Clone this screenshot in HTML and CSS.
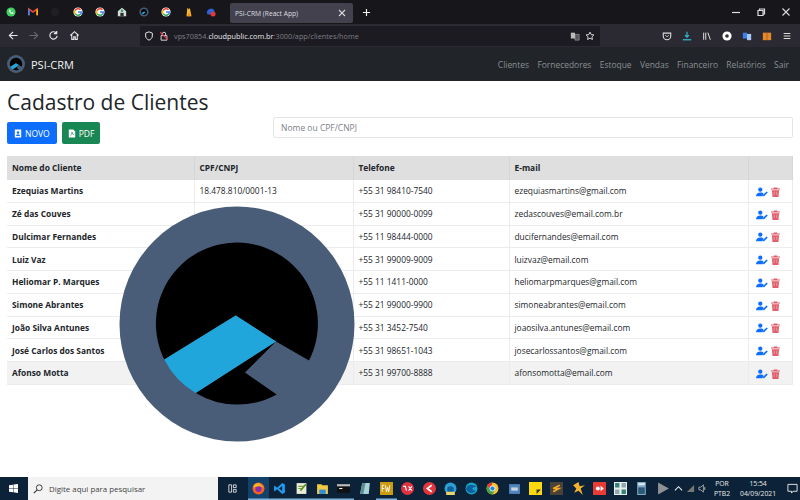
FILE: index.html
```html
<!DOCTYPE html>
<html lang="pt-BR">
<head>
<meta charset="utf-8">
<title>PSI-CRM (React App)</title>
<link rel="stylesheet" href="styles.css">
</head>
<body>
<div class="window">
  <div class="tabstrip">
    <div class="pins">
      <svg class="pin" viewBox="0 0 12 12"><circle cx="6" cy="6" r="5.500" fill="#3fd263"/><path d="M3.500 3.500c0 3 2 5 5 5l.7-1.500-1.500-.7-.7.7c-1-.4-1.500-1-1.900-1.900l.7-.7-.7-1.500z" fill="#fff"/></svg>
      <svg class="pin" viewBox="0 0 12 12"><path d="M1 10V2.500l5 3.500 5-3.500V10" fill="none" stroke="#e8453c" stroke-width="2"/><path d="M1 10V3" stroke="#3f85f4" stroke-width="2"/><path d="M11 10V3" stroke="#f6b704" stroke-width="2"/></svg>
      <svg class="pin" viewBox="0 0 12 12"><circle cx="6" cy="6" r="5" fill="#202024"/></svg>
      <svg class="pin" viewBox="0 0 12 12"><circle cx="6" cy="6" r="5.500" fill="#fff"/><path d="M9 3.200A4 4 0 0 0 2.600 4.300" fill="none" stroke="#e8453c" stroke-width="1.800"/><path d="M2.400 4A4 4 0 0 0 2.800 8.500" fill="none" stroke="#f6b704" stroke-width="1.800"/><path d="M2.800 8.300A4 4 0 0 0 9 8.700" fill="none" stroke="#34a853" stroke-width="1.800"/><path d="M6 6h4a4 4 0 0 1-1.200 2.900" fill="none" stroke="#4285f4" stroke-width="1.800"/></svg>
      <svg class="pin" viewBox="0 0 12 12"><circle cx="6" cy="6" r="5.500" fill="#fff"/><path d="M9 3.200A4 4 0 0 0 2.600 4.300" fill="none" stroke="#e8453c" stroke-width="1.800"/><path d="M2.400 4A4 4 0 0 0 2.800 8.500" fill="none" stroke="#f6b704" stroke-width="1.800"/><path d="M2.800 8.300A4 4 0 0 0 9 8.700" fill="none" stroke="#34a853" stroke-width="1.800"/><path d="M6 6h4a4 4 0 0 1-1.200 2.900" fill="none" stroke="#4285f4" stroke-width="1.800"/></svg>
      <svg class="pin" viewBox="0 0 12 12"><path d="M1 11V5l5-4 5 4v6z" fill="#d5dcd8"/><path d="M4 11V7h4v4z" fill="#2d3236"/><circle cx="6" cy="4.500" r="1.500" fill="#2f9e64"/></svg>
      <svg class="pin" viewBox="0 0 12 12"><circle cx="6" cy="6" r="5.500" fill="#4a5d78"/><circle cx="6" cy="6" r="3.600" fill="#050505"/><path d="M2.800 7.400 6 5.300l1.800 1.200L4.500 9z" fill="#22a7dc"/></svg>
      <svg class="pin" viewBox="0 0 12 12"><circle cx="6" cy="6" r="5.500" fill="#fff"/><path d="M9 3.200A4 4 0 0 0 2.600 4.300" fill="none" stroke="#e8453c" stroke-width="1.800"/><path d="M2.400 4A4 4 0 0 0 2.800 8.500" fill="none" stroke="#f6b704" stroke-width="1.800"/><path d="M2.800 8.300A4 4 0 0 0 9 8.700" fill="none" stroke="#34a853" stroke-width="1.800"/><path d="M6 6h4a4 4 0 0 1-1.200 2.900" fill="none" stroke="#4285f4" stroke-width="1.800"/></svg>
      <svg class="pin" viewBox="0 0 12 12"><path d="M3 11 4 1l2 2 1-2 2 10z" fill="#f8b92c"/><path d="M4 11 6 6l2 5z" fill="#f58a1f"/></svg>
      <svg class="pin" viewBox="0 0 12 12"><path d="M1 7a5 5 0 0 1 9-3v5H2z" fill="#2d63d8"/><circle cx="8.500" cy="8.500" r="3" fill="#e53935"/></svg>
    </div>
    <div class="tab"><span>PSI-CRM (React App)</span><svg class="tab-x" viewBox="0 0 8 8"><path d="M1 1l6 6M7 1 1 7" stroke="#d8d8da" stroke-width="1.100"/></svg></div>
    <svg class="newtab" viewBox="0 0 10 10"><path d="M5 1v8M1 5h8" stroke="#eee" stroke-width="1.300"/></svg>
    <div class="winbtns">
      <svg class="winbtn" viewBox="0 0 10 10"><path d="M1 5.500h8" stroke="#ddd" stroke-width="1.200"/></svg>
      <svg class="winbtn" viewBox="0 0 10 10"><path d="M2 3.500h5v5H2zM3.500 3.500V2H8.500v5H7" fill="none" stroke="#ddd" stroke-width="1.200"/></svg>
      <svg class="winbtn" viewBox="0 0 10 10"><path d="M1.500 1.500l7 7M8.500 1.500l-7 7" stroke="#ddd" stroke-width="1.100"/></svg>
    </div>
  </div>

  <div class="toolbar">
    <div class="navbtns">
      <svg class="tool" viewBox="0 0 12 12"><path d="M10.500 6h-9M5.500 2l-4 4 4 4" fill="none" stroke="#e4e4e6" stroke-width="1.300"/></svg>
      <svg class="tool" viewBox="0 0 12 12"><path d="M1.500 6h9M6.500 2l4 4-4 4" fill="none" stroke="#66666b" stroke-width="1.300"/></svg>
      <svg class="tool" viewBox="0 0 12 12"><path d="M10 6.500A4 4 0 1 1 8.800 3M9.500 1v3h-3" fill="none" stroke="#e4e4e6" stroke-width="1.300"/></svg>
      <svg class="tool" viewBox="0 0 12 12"><path d="M1.500 6 6 1.800 10.500 6M3 5v5.200h2.200V7.500h1.600v2.700H9V5" fill="none" stroke="#e4e4e6" stroke-width="1.200"/></svg>
    </div>
    <div class="urlbar">
      <svg class="urlicon" viewBox="0 0 12 12"><path d="M6 1 2 2.500V6c0 2.500 1.800 4 4 5 2.200-1 4-2.500 4-5V2.500z" fill="none" stroke="#e4e4e6" stroke-width="1.200"/></svg>
      <svg class="urlicon" viewBox="0 0 12 12"><path d="M2.500 5.500h7v5.500h-7zM4 5.500V3.500a2 2 0 0 1 4 0v2" fill="none" stroke="#e4e4e6" stroke-width="1.100"/><path d="M1.500 1.500l9 9" stroke="#e5384f" stroke-width="1.300"/></svg>
      <div class="url"><span class="dim">vps70854.</span><span class="host">cloudpublic.com.br</span><span class="dim">:3000/app/clientes/home</span></div>
      <svg class="urlicon wide" viewBox="0 0 12 12"><path d="M1 2h5v7H1z" fill="#bbb"/><path d="M6 4h5v7H6z" fill="#55555a" stroke="#bbb" stroke-width=".6"/></svg>
      <svg class="urlicon" viewBox="0 0 12 12"><path d="m6 1.300 1.400 3 3.300.4-2.400 2.200.6 3.300L6 8.600l-2.900 1.600.6-3.300-2.400-2.200 3.300-.4z" fill="none" stroke="#e4e4e6" stroke-width="1.100"/></svg>
    </div>
    <div class="exts">
      <svg class="ext" viewBox="0 0 12 12"><path d="M1.500 2.500h9V6a4.500 4.500 0 0 1-9 0z" fill="none" stroke="#ddd" stroke-width="1.300"/><path d="M4 5l2 2 2-2" fill="none" stroke="#ddd" stroke-width="1.100"/></svg>
      <svg class="ext" viewBox="0 0 12 12"><path d="M6 1v6.500M3.500 5 6 7.500 8.500 5" fill="none" stroke="#2dbdd0" stroke-width="1.400"/><path d="M1 10.500h10" stroke="#2dbdd0" stroke-width="1.500"/></svg>
      <svg class="ext" viewBox="0 0 12 12"><path d="M2 2v8.500M4.500 2v8.500M7 2l3 8.500" fill="none" stroke="#ddd" stroke-width="1.200"/></svg>
      <svg class="ext" viewBox="0 0 12 12"><circle cx="6" cy="6" r="5.500" fill="#fff"/><circle cx="6" cy="6" r="2.200" fill="#333"/></svg>
      <svg class="ext" viewBox="0 0 12 12"><path d="M1 2h5v7H1z" fill="#3f7fe8"/><path d="M6 3.500h5V11H6z" fill="#a9c8f5"/></svg>
      <svg class="ext" viewBox="0 0 12 12"><path d="M1 2h10v9H1z" fill="#e58a2c"/><path d="M6 2v9" stroke="#a85c12"/></svg>
      <svg class="ext" viewBox="0 0 12 12"><path d="M2 3h8M2 6h8M2 9h8" stroke="#ddd" stroke-width="1.200"/></svg>
    </div>
  </div>

  <nav class="appnav">
    <div class="brand">
      <svg class="brand-logo" viewBox="0 0 236 236"><use href="#logo"/></svg>
      <span>PSI-CRM</span>
    </div>
    <div class="menu">
      <a>Clientes</a><a>Fornecedores</a><a>Estoque</a><a>Vendas</a><a>Financeiro</a><a>Relatórios</a><a>Sair</a>
    </div>
  </nav>

  <main class="content">
    <h1>Cadastro de Clientes</h1>
    <div class="actions">
      <div class="btns">
        <button class="btn blue"><svg class="btn-ic" viewBox="0 0 10 10"><path d="M1 0h8v10H1z" fill="#fff"/><circle cx="5" cy="3.800" r="1.500" fill="#0d6efd"/><path d="M2.500 8a2.500 2 0 0 1 5 0z" fill="#0d6efd"/></svg>NOVO</button>
        <button class="btn green"><svg class="btn-ic" viewBox="0 0 10 10"><path d="M1 0h5.500L9 2.500V10H1z" fill="#fff"/><path d="M3 8c1.500-1 2.500-3 2-5 0 2 1 3.500 2.500 3.500" fill="none" stroke="#198754" stroke-width=".8"/></svg>PDF</button>
      </div>
      <input class="search" type="text" placeholder="Nome ou CPF/CNPJ">
    </div>

    <table class="grid">
      <thead>
        <tr><th class="c1">Nome do Cliente</th><th class="c2">CPF/CNPJ</th><th class="c3">Telefone</th><th class="c4">E-mail</th><th class="c5"></th></tr>
      </thead>
      <tbody>
        <tr><td class="name">Ezequias Martins</td><td>18.478.810/0001-13</td><td>+55 31 98410-7540</td><td>ezequiasmartins@gmail.com</td><td class="ops"><svg class="i-edit"><use href="#edit"/></svg><svg class="i-del"><use href="#del"/></svg></td></tr>
        <tr><td class="name">Zé das Couves</td><td></td><td>+55 31 90000-0099</td><td>zedascouves@email.com.br</td><td class="ops"><svg class="i-edit"><use href="#edit"/></svg><svg class="i-del"><use href="#del"/></svg></td></tr>
        <tr><td class="name">Dulcimar Fernandes</td><td></td><td>+55 11 98444-0000</td><td>ducifernandes@email.com</td><td class="ops"><svg class="i-edit"><use href="#edit"/></svg><svg class="i-del"><use href="#del"/></svg></td></tr>
        <tr><td class="name">Luiz Vaz</td><td></td><td>+55 31 99009-9009</td><td>luizvaz@email.com</td><td class="ops"><svg class="i-edit"><use href="#edit"/></svg><svg class="i-del"><use href="#del"/></svg></td></tr>
        <tr><td class="name">Heliomar P. Marques</td><td></td><td>+55 11 1411-0000</td><td>heliomarpmarques@gmail.com</td><td class="ops"><svg class="i-edit"><use href="#edit"/></svg><svg class="i-del"><use href="#del"/></svg></td></tr>
        <tr><td class="name">Simone Abrantes</td><td></td><td>+55 21 99000-9900</td><td>simoneabrantes@email.com</td><td class="ops"><svg class="i-edit"><use href="#edit"/></svg><svg class="i-del"><use href="#del"/></svg></td></tr>
        <tr><td class="name">João Silva Antunes</td><td></td><td>+55 31 3452-7540</td><td>joaosilva.antunes@email.com</td><td class="ops"><svg class="i-edit"><use href="#edit"/></svg><svg class="i-del"><use href="#del"/></svg></td></tr>
        <tr><td class="name">José Carlos dos Santos</td><td></td><td>+55 31 98651-1043</td><td>josecarlossantos@gmail.com</td><td class="ops"><svg class="i-edit"><use href="#edit"/></svg><svg class="i-del"><use href="#del"/></svg></td></tr>
        <tr class="hover"><td class="name">Afonso Motta</td><td></td><td>+55 31 99700-8888</td><td>afonsomotta@email.com</td><td class="ops"><svg class="i-edit"><use href="#edit"/></svg><svg class="i-del"><use href="#del"/></svg></td></tr>
      </tbody>
    </table>
    <svg class="big-logo" viewBox="0 0 236 236"><use href="#logo"/></svg>
  </main>

  <footer class="taskbar">
    <svg class="start" viewBox="0 0 10 10"><path d="M0 1.300 4.500.7v4H0zM5 .6 10 0v4.700H5zM0 5.300h4.500v4L0 8.700zM5 5.300h5V10l-5-.7z" fill="#fff"/></svg>
    <div class="search-box"><svg class="lens" viewBox="0 0 12 12"><circle cx="7.500" cy="4.500" r="3.500" fill="none" stroke="#333" stroke-width="1.100"/><path d="M5 7 1 11" stroke="#333" stroke-width="1.300"/></svg><span>Digite aqui para pesquisar</span></div>
    <div class="apps">
      <div class="app taskview"><svg viewBox="0 0 12 12"><path d="M2 2h3v8H2zM7 2h3v3H7zM7 7h3v3H7z" fill="none" stroke="#ddd"/></svg></div>
      <div class="app active"><svg viewBox="0 0 12 12"><circle cx="6" cy="6" r="5.500" fill="#f9601f"/><circle cx="6" cy="6.500" r="2.800" fill="#7d2fb5"/><path d="M1 5c1-3 3-4 6-4-1 1 3 1 4 5-1-2-3-2.500-5-2z" fill="#fdb42d"/></svg></div>
      <div class="app open"><svg viewBox="0 0 12 12"><path d="M8.500 1 11 2.200v7.600L8.500 11 3.800 6.800 1.700 8.500 1 8V4l.7-.5 2.100 1.700z" fill="#1f9cf0"/><path d="M8.500 3.800v4.400L5.500 6z" fill="#0b2138"/></svg></div>
      <div class="app open"><svg viewBox="0 0 12 12"><path d="M1.500 1h9v10h-9z" fill="#e9eed9"/><path d="M3 4h6M3 6h4" stroke="#7aa33b"/><path d="M5 8l5-6" stroke="#5d8f20" stroke-width="1.500"/></svg></div>
      <div class="app open"><svg viewBox="0 0 12 12"><path d="M1 2h4l1 1h5v8H1z" fill="#f5c844"/><path d="M3 7h6v4H3z" fill="#2f8fdb"/></svg></div>
      <div class="app open"><svg viewBox="0 0 12 12"><path d="M0 2h12v8H0z" fill="#111"/><path d="M0 2h12v2H0z" fill="#bbb"/><path d="M2 6h3" stroke="#eee"/></svg></div>
      <div class="app"><svg viewBox="0 0 12 12"><path d="M3 1h7l-1 10H1z" fill="#a9d3d8"/><path d="M3 1h3L4 11H1z" fill="#5b8f97"/></svg></div>
      <div class="app open"><svg viewBox="0 0 12 12"><path d="M0 0h12v12H0z" fill="#c99a12"/><path d="M2 9V3h2M2 6h2M5 3l1 6 1-4 1 4 1-6" fill="none" stroke="#fff" stroke-width=".8"/></svg></div>
      <div class="app"><svg viewBox="0 0 12 12"><circle cx="6" cy="6" r="6" fill="#dd3340"/><path d="M2 4h2l1 4M7 4l3 4M10 4 7 8" fill="none" stroke="#fff"/></svg></div>
      <div class="app"><svg viewBox="0 0 12 12"><circle cx="6" cy="6" r="6" fill="#e2343b"/><path d="M8 3 4 6l4 3" fill="none" stroke="#fff" stroke-width="1.500"/></svg></div>
      <div class="app"><svg viewBox="0 0 12 12"><circle cx="6" cy="6" r="5.500" fill="#2d9fd4"/><circle cx="6" cy="7" r="3" fill="#0f5f9a"/><path d="M2 9h8v3H2z" fill="#e8d46a"/></svg></div>
      <div class="app"><svg viewBox="0 0 12 12"><circle cx="6" cy="6" r="5.500" fill="#1aa6c8"/><path d="M1 6c1-4 7-5 10-1-2-1-5 0-4 2 1 1 2 1 3 1-2 3-8 3-9-2z" fill="#0c5e9f"/></svg></div>
      <div class="app"><svg viewBox="0 0 12 12"><circle cx="6" cy="6" r="5.500" fill="#fbc02d"/><path d="M6 .5A5.500 5.500 0 0 0 1.200 3.300L4 7z" fill="#e53935"/><path d="M1.200 3.300A5.500 5.500 0 0 0 6 11.500L8 7.500 4 7z" fill="#43a047"/><circle cx="6" cy="6" r="2.400" fill="#1e88e5" stroke="#fff" stroke-width=".8"/></svg></div>
      <div class="app"><svg viewBox="0 0 12 12"><path d="M1 2h10v9H1z" fill="#4f86bd"/><path d="M3 5h6v3H3z" fill="#c8d5e0"/></svg></div>
      <div class="app"><svg viewBox="0 0 12 12"><path d="M0 0h12v12H0z" fill="#fbd90e"/><path d="M7 7h4L7 11z" fill="#35322a"/></svg></div>
      <div class="app"><svg viewBox="0 0 12 12"><path d="M0 0h12v12H0z" fill="#4a4238"/><path d="M9 3 3 6h5l-5 3" fill="none" stroke="#f0a92b" stroke-width="1.600"/></svg></div>
      <div class="app"><svg viewBox="0 0 12 12"><path d="m6 0 1 4 5-1-4 3 2 6-4-4-4 2 2-4L1 3z" fill="#f3b22e"/></svg></div>
      <div class="app"><svg viewBox="0 0 12 12"><path d="M0 0h12v12H0z" fill="#ea3a35"/><circle cx="4.500" cy="6" r="1.800" fill="#fff"/><path d="M7 3.500 10 6 7 8.500z" fill="#fff"/></svg></div>
      <div class="app"><svg viewBox="0 0 12 12"><path d="M0 0h12v12H0z" fill="#e8eee9"/><path d="M1 1h4v4H1zM7 7h4v4H7z" fill="#36807a"/><path d="M7 1h4v4H7zM1 7h4v4H1z" fill="#8fa7b0"/></svg></div>
      <div class="app"><svg viewBox="0 0 12 12"><path d="M2 0h8v12H2z" fill="#7fa9c4"/><path d="M3 1h6v2H3z" fill="#dcebf3"/><path d="M3 5h6v6H3z" fill="#2b5875"/></svg></div>
      <div class="app"><svg viewBox="0 0 12 12"><path d="M1 .5 11 6 1 11.500z" fill="#8e9294"/></svg></div>
    </div>
    <div class="tray">
      <svg class="tray-ic" viewBox="0 0 10 10"><path d="M1 7l4-4 4 4" fill="none" stroke="#eee" stroke-width="1.200"/></svg>
      <svg class="tray-ic" viewBox="0 0 10 10"><path d="M1 9 9 1v8z" fill="#777"/></svg>
      <svg class="tray-ic" viewBox="0 0 10 10"><path d="M1 3.500h2L6 1v8L3 6.500H1z" fill="none" stroke="#ccc" stroke-width=".8"/><path d="M7.500 3.500v3" stroke="#ccc"/></svg>
      <div class="lang"><span>POR</span><span>PTB2</span></div>
      <div class="clock"><span>15:54</span><span>04/09/2021</span></div>
      <svg class="notif" viewBox="0 0 12 12"><path d="M1 1.500h10v7.500H6.500L5 11V9H1z" fill="none" stroke="#eee" stroke-width="1"/></svg>
    </div>
  </footer>
</div>

<svg class="defs" width="0" height="0" aria-hidden="true">
  <defs>
    <g id="logo">
      <circle cx="118" cy="118" r="117.500" fill="#4a5d78"/>
      <path d="M45.300 153.500A81 81 0 1 1 190 154.500L157 135.500 116.700 109.500Z" fill="#000"/>
      <path d="M76.700 187A81 81 0 0 0 157.700 188.500L126 166.500 157 135.500Z" fill="#000"/>
      <path d="M45.300 153.500 116.700 109.500 157 135.500 76.700 187A81 81 0 0 1 45.300 153.500Z" fill="#21a6db"/>
    </g>
    <symbol id="edit" viewBox="0 0 14 11"><circle cx="5" cy="2.800" r="2.500" fill="#0d6efd"/><path d="M0 10.500c0-3 2-4.500 5-4.500 2 0 3 .5 4 1.500L7.500 10.500z" fill="#0d6efd"/><path d="m8.500 10 4.500-4.500" stroke="#0d6efd" stroke-width="2"/></symbol>
    <symbol id="del" viewBox="0 0 10 11"><path d="M0 1.500h3V.5h4v1h3v1.300H0z" fill="#dc3545"/><path d="M1 3.500h8L8.300 11H1.700z" fill="#dc3545"/><path d="M3.500 5v4M6.500 5v4" stroke="#f2b3b9" stroke-width=".7"/></symbol>
  </defs>
</svg>
</body>
</html>
```

FILE: styles.css
```css
* { box-sizing: border-box; }
html, body { margin: 0; padding: 0; }
body { width: 800px; height: 500px; overflow: hidden; font-family: "Open Sans", "Noto Sans", sans-serif; background: #fff; }
.window { width: 800px; height: 500px; display: flex; flex-direction: column; }
.defs { position: absolute; }

.tabstrip { height: 24px; background: #17171b; display: flex; align-items: center; padding-left: 5px; flex: none; }
.pins { display: flex; gap: 10.200px; width: 225px; flex: none; }
.pin { width: 10px; height: 10px; flex: none; margin-left: 1px; margin-right: 1px; }
.tab { width: 123px; height: 20px; margin-top: 2px; background: #42414d; border-radius: 2px; display: flex; align-items: center; justify-content: space-between; padding: 0 7px 0 5px; color: #dfdfe2; font-size: 6.700px; flex: none; }
.tab-x { width: 8px; height: 8px; }
.newtab { width: 9px; height: 9px; margin-left: 9px; flex: none; }
.winbtns { margin-left: auto; display: flex; gap: 15px; padding-right: 9px; }
.winbtn { width: 10px; height: 10px; }

.toolbar { height: 23px; background: #2b2a33; display: flex; align-items: center; flex: none; padding-left: 8px; }
.navbtns { display: flex; gap: 9.200px; width: 132px; flex: none; }
.tool { width: 11px; height: 11px; }
.urlbar { width: 460px; height: 20px; background: #1c1b22; display: flex; align-items: center; padding: 0 5px 0 4px; gap: 5px; flex: none; }
.urlicon { width: 10px; height: 10px; flex: none; }
.url { font-size: 7.300px; flex: 1; white-space: nowrap; }
.dim { color: #7d7d84; }
.host { color: #e8e8ea; }
.exts { display: flex; gap: 10px; margin-left: auto; padding-right: 8px; }
.ext { width: 10px; height: 10px; }

.appnav { height: 34px; background: #212529; display: flex; align-items: center; justify-content: space-between; padding: 0 11px 0 7px; flex: none; }
.brand { display: flex; align-items: center; gap: 6px; color: #f2f2f2; font-size: 11px; }
.brand-logo { width: 18px; height: 18px; }
.menu { display: flex; gap: 8.300px; font-size: 8.450px; }
.menu a { color: #8b8f93; }

.content { flex: 1; position: relative; padding: 8px 7px 0; background: #fff; }
h1 { margin: 0; font-size: 21px; font-weight: 400; line-height: 26px; color: #212529; }
.actions { display: flex; align-items: flex-start; margin-top: 2px; height: 39px; }
.btns { display: flex; gap: 5px; width: 266px; flex: none; padding-top: 5px; }
.btn { height: 22px; border: 0; border-radius: 2px; color: #fff; font: 400 8.500px "Open Sans", sans-serif; padding: 0 7px; display: flex; align-items: center; gap: 3px; }
.blue { background: #0d6efd; }
.green { background: #198754; width: 38px; padding: 0 5px 0 6px; }
.btn-ic { width: 8px; height: 9px; flex: none; }
.search { width: 520px; height: 21px; border: 1px solid #e4e6e8; border-radius: 2px; padding: 0 7px; font: 400 8.500px "Open Sans", sans-serif; }
.search::placeholder { color: #7d8287; opacity: 1; }

.grid { width: 786px; border-collapse: collapse; table-layout: fixed; font-size: 8.400px; color: #212529; }
th { height: 23.500px; background: #dfdfdf; text-align: left; font-weight: 700; padding: 0 5px; border: 1px solid #d6d6d6; border-width: 0 1px 0 0; }
td { height: 22.750px; padding: 0 5px; border-bottom: 1px solid #ececec; border-right: 1px solid #ececec; white-space: nowrap; }
.c1 { width: 187px; } .c2 { width: 159px; } .c3 { width: 156px; } .c4 { width: 239px; }
.name { font-weight: 700; }
.hover td { background: #f2f2f2; }
.ops { padding-left: 7.500px; }
.i-edit { width: 12px; height: 10px; margin-right: 3px; vertical-align: middle; }
.i-del { width: 9px; height: 10px; vertical-align: middle; opacity: .8; }
.big-logo { position: absolute; left: 119px; top: 124.500px; width: 236px; height: 236px; }

.taskbar { height: 23px; background: #0c2238; display: flex; align-items: center; flex: none; }
.start { width: 9px; height: 9px; margin: 0 10px 0 9px; flex: none; }
.search-box { width: 190px; height: 23px; background: #f3f3f3; display: flex; align-items: center; gap: 6px; padding-left: 5px; font-size: 7.900px; color: #444; flex: none; }
.lens { width: 10px; height: 10px; }
.apps { display: flex; margin-left: 3px; flex: none; }
.app { width: 21.300px; height: 23px; display: flex; align-items: center; justify-content: center; flex: none; }
.app svg { width: 13px; height: 13px; }
.taskview { width: 22px; margin-right: 5px; }
.taskview svg { width: 11px; height: 11px; }
.open { box-shadow: inset 0 -2px 0 -0.500px #7fb6dd; }
.active { background: #12426a; box-shadow: inset 0 -2px 0 -0.500px #7fb6dd; }
.tray { display: flex; align-items: center; margin-left: auto; color: #e8e8e8; font-size: 6.800px; padding-right: 13px; flex: none; gap: 3px; }
.tray-ic { width: 9px; height: 9px; }
.lang, .clock { display: flex; flex-direction: column; align-items: center; line-height: 10px; }
.lang { margin-left: 4px; }
.clock { margin-left: 7px; }
.notif { width: 11px; height: 11px; margin-left: 8px; }
```
